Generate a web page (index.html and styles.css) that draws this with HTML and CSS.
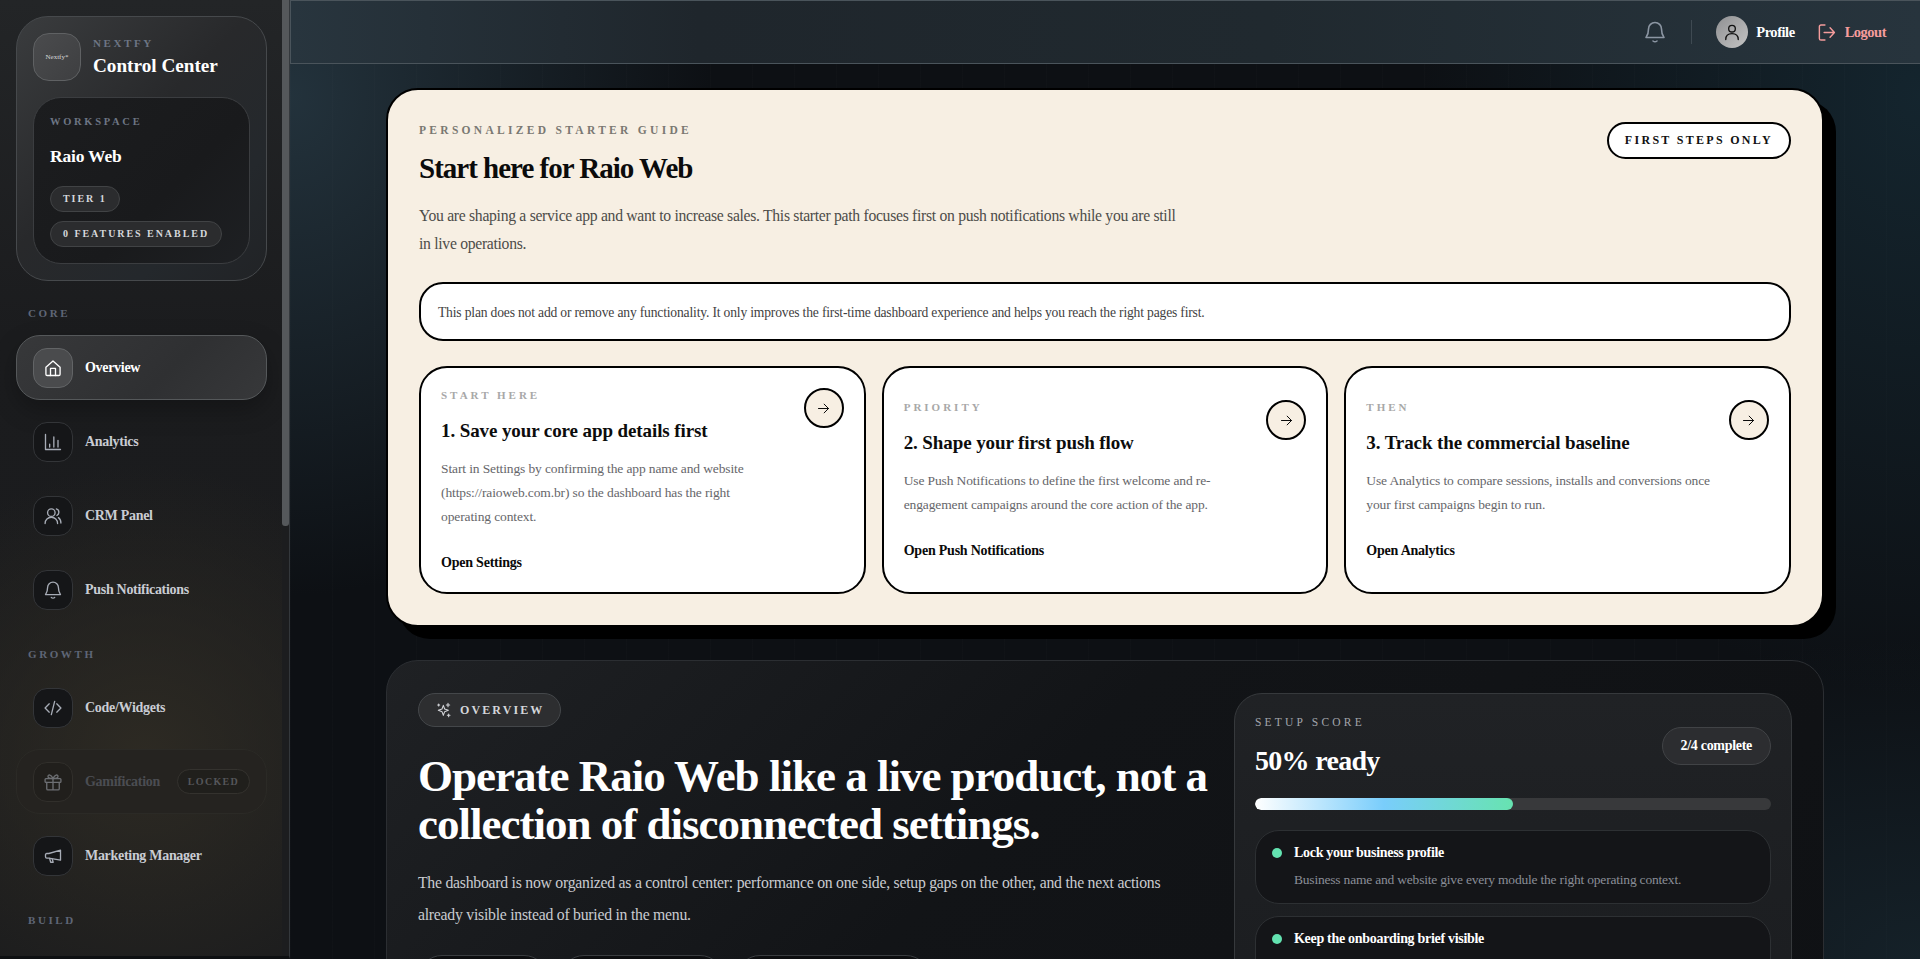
FILE: index.html
```html
<!DOCTYPE html>
<html lang="en">
<head>
<meta charset="utf-8">
<title>Nextfy Control Center</title>
<link rel="stylesheet" href="styles.css">
</head>
<body>
<div class="app">
  <aside class="sidebar">
    <div class="side-content">
      <div class="brand-card">
        <div class="brand-head">
          <div class="logo"><span>Nextfy*</span></div>
          <div class="brand-text">
            <div class="brand-eyebrow">NEXTFY</div>
            <div class="brand-title">Control Center</div>
          </div>
        </div>
        <div class="workspace">
          <div class="ws-eyebrow">WORKSPACE</div>
          <div class="ws-name">Raio Web</div>
          <div class="ws-tags">
            <span class="tag">TIER 1</span>
            <span class="tag">0 FEATURES ENABLED</span>
          </div>
        </div>
      </div>
      <div class="nav-label nav-label-core">CORE</div>
      <nav class="nav-group">
        <a class="nav-item active"><span class="nav-icon"><svg viewBox="0 0 24 24"><path d="M3.500 11 12 3.500 20.500 11v8.500a1.500 1.500 0 0 1-1.500 1.500H5a1.500 1.500 0 0 1-1.500-1.500z"/><path d="M9 21v-8.500h6V21"/></svg></span><span>Overview</span></a>
        <a class="nav-item"><span class="nav-icon"><svg viewBox="0 0 24 24"><path d="M3 3v18h18"/><path d="M8 14.500V18M13 6v12M18 10v8"/></svg></span><span>Analytics</span></a>
        <a class="nav-item"><span class="nav-icon"><svg viewBox="0 0 24 24"><circle cx="10" cy="8" r="4.500"/><path d="M2.500 21c0-4.500 3.300-7.500 7.500-7.500s7.500 3 7.500 7.500"/><path d="M16 3.500c2 .6 3.200 2.400 3 4.500-.1 1.400-1 2.700-2.300 3.400M18.500 14c1.900 1.200 3 3.500 3 6.500"/></svg></span><span>CRM Panel</span></a>
        <a class="nav-item"><span class="nav-icon"><svg viewBox="0 0 24 24"><path d="M12 2.500a6.500 6.500 0 0 0-6.500 6.500c0 6-2.500 8-2.500 8.500h18c0-.5-2.500-2.500-2.500-8.500A6.500 6.500 0 0 0 12 2.500z"/><path d="M10 21c1 .8 3 .8 4 0"/></svg></span><span>Push Notifications</span></a>
      </nav>
      <div class="nav-label nav-label-growth">GROWTH</div>
      <nav class="nav-group">
        <a class="nav-item"><span class="nav-icon"><svg viewBox="0 0 24 24"><path d="M7.500 7 2.500 12l5 5M16.500 7l5 5-5 5M14 4l-4 16"/></svg></span><span>Code/Widgets</span></a>
        <a class="nav-item locked"><span class="nav-icon"><svg viewBox="0 0 24 24"><rect x="2.500" y="8" width="19" height="4.500" rx="1"/><path d="M4.500 12.500V20a1.500 1.500 0 0 0 1.500 1.500h12a1.500 1.500 0 0 0 1.500-1.500v-7.500M12 8v13.500"/><path d="M12 8C10 3 6 2.500 6 5.500 6 7 7.500 8 12 8zM12 8c2-5 6-5.500 6-2.500C18 7 16.500 8 12 8z"/></svg></span><span class="nav-name">Gamification</span><span class="lock-tag">LOCKED</span></a>
        <a class="nav-item"><span class="nav-icon"><svg viewBox="0 0 24 24"><path d="M21 5v12L7 14.500H4.500A1.500 1.500 0 0 1 3 13v-2.500A1.500 1.500 0 0 1 4.500 9H7z"/><path d="M8 15l1.200 4.500h3L11.200 16"/></svg></span><span>Marketing Manager</span></a>
      </nav>
      <div class="nav-label nav-label-build">BUILD</div>
    </div>
    <div class="side-track"><div class="side-thumb"></div></div>
  </aside>

  <div class="main">
    <header class="topbar">
      <svg class="bell" viewBox="0 0 24 24"><path d="M12 2.500a6.500 6.500 0 0 0-6.500 6.500c0 6-2.500 8-2.500 8.500h18c0-.5-2.500-2.500-2.500-8.500A6.500 6.500 0 0 0 12 2.500z"/><path d="M10 21c1 .8 3 .8 4 0"/></svg>
      <span class="top-sep"></span>
      <a class="profile">
        <span class="avatar"><svg viewBox="0 0 24 24"><circle cx="12" cy="8" r="4"/><path d="M4.500 21c0-4.500 3-7 7.500-7s7.500 2.500 7.500 7"/></svg></span>
        <span>Profile</span>
      </a>
      <a class="logout">
        <svg viewBox="0 0 24 24"><path d="M10 2.500H5A2 2 0 0 0 3 4.500v15a2 2 0 0 0 2 2h5"/><path d="M9 12h13M16.500 6l5.500 6-5.500 6"/></svg>
        <span>Logout</span>
      </a>
    </header>

    <div class="content">
      <section class="guide">
        <div class="guide-head">
          <div>
            <div class="guide-eyebrow">PERSONALIZED STARTER GUIDE</div>
            <h2 class="guide-title">Start here for Raio Web</h2>
            <p class="guide-lead">You are shaping a service app and want to increase sales. This starter path focuses first on push notifications while you are still in live operations.</p>
          </div>
          <span class="guide-pill">FIRST STEPS ONLY</span>
        </div>
        <div class="guide-note">This plan does not add or remove any functionality. It only improves the first-time dashboard experience and helps you reach the right pages first.</div>
        <div class="steps">
          <article class="step">
            <div class="step-body">
              <div class="step-eyebrow">START HERE</div>
              <h3 class="step-title">1. Save your core app details first</h3>
              <p class="step-text step-text-narrow">Start in Settings by confirming the app name and website (https://raioweb.com.br) so the dashboard has the right operating context.</p>
              <a class="step-link">Open Settings</a>
            </div>
            <span class="step-arrow"><svg viewBox="0 0 24 24"><path d="M4 12h16M13 5l7 7-7 7"/></svg></span>
          </article>
          <article class="step">
            <div class="step-body">
              <div class="step-eyebrow">PRIORITY</div>
              <h3 class="step-title">2. Shape your first push flow</h3>
              <p class="step-text">Use Push Notifications to define the first welcome and re-engagement campaigns around the core action of the app.</p>
              <a class="step-link">Open Push Notifications</a>
            </div>
            <span class="step-arrow"><svg viewBox="0 0 24 24"><path d="M4 12h16M13 5l7 7-7 7"/></svg></span>
          </article>
          <article class="step">
            <div class="step-body">
              <div class="step-eyebrow">THEN</div>
              <h3 class="step-title">3. Track the commercial baseline</h3>
              <p class="step-text">Use Analytics to compare sessions, installs and conversions once your first campaigns begin to run.</p>
              <a class="step-link">Open Analytics</a>
            </div>
            <span class="step-arrow"><svg viewBox="0 0 24 24"><path d="M4 12h16M13 5l7 7-7 7"/></svg></span>
          </article>
        </div>
      </section>

      <section class="hero">
        <div class="hero-left">
          <span class="hero-pill"><svg viewBox="0 0 24 24"><path d="M11 5l2 5.500 5.500 2-5.500 2-2 5.500-2-5.500-5.500-2 5.500-2z"/><path d="M18 2v5M15.500 4.500h5M19 18v4M17 20h4M4 3v3M2.500 4.500h3"/></svg>OVERVIEW</span>
          <h1 class="hero-title">Operate Raio Web like a live product, not a collection of disconnected settings.</h1>
          <p class="hero-text">The dashboard is now organized as a control center: performance on one side, setup gaps on the other, and the next actions already visible instead of buried in the menu.</p>
          <div class="hero-actions">
            <a class="hero-btn btn-a"></a>
            <a class="hero-btn btn-b"></a>
            <a class="hero-btn btn-c"></a>
          </div>
        </div>
        <aside class="score">
          <div class="score-head">
            <div>
              <div class="score-eyebrow">SETUP SCORE</div>
              <div class="score-value">50% ready</div>
            </div>
            <span class="score-pill">2/4 complete</span>
          </div>
          <div class="bar"><div class="bar-fill" style="width:50%"></div></div>
          <div class="check">
            <span class="dot"></span>
            <div>
              <div class="check-title">Lock your business profile</div>
              <div class="check-text">Business name and website give every module the right operating context.</div>
            </div>
          </div>
          <div class="check">
            <span class="dot"></span>
            <div>
              <div class="check-title">Keep the onboarding brief visible</div>
            </div>
          </div>
        </aside>
      </section>
    </div>
  </div>
</div>
</body>
</html>
```
FILE: styles.css
```css
* { box-sizing: border-box; }
html, body { margin: 0; height: 100%; overflow: hidden; }
body { font-family: "Liberation Serif", "Times New Roman", serif; background: #0d1014; color: #fff; }
a { color: inherit; text-decoration: none; }
svg { fill: none; stroke: currentColor; stroke-width: 1.6; stroke-linecap: round; stroke-linejoin: round; display: block; }
h1, h2, h3, p { margin: 0; }

.app { display: flex; height: 959px; overflow: hidden; }

/* Sidebar */
.sidebar {
  width: 290px; flex: none; display: flex; height: 959px; overflow: hidden;
  border-right: 1px solid #34383c; border-bottom: 3px solid #0e1012;
  background:
    radial-gradient(300px 290px at 50% 79%, #2d2a23 0%, rgba(45,42,35,0) 100%),
    linear-gradient(180deg, #232527 0%, #1b1c1e 35%, #1a1b1d 100%);
}
.side-content { width: 282px; flex: none; padding: 16px 0 0 16px; }
.side-track { width: 7px; flex: none; background: #1c1d1f; }
.side-thumb { height: 526px; border-radius: 0 0 3px 3px; background: #55585b; }

.brand-card {
  width: 251px; height: 265px; padding: 16px; border-radius: 32px;
  border: 1px solid #46494c;
  background: linear-gradient(135deg, #3a3c3e 0%, #28292b 45%, #24282c 75%, #212326 100%);
}
.brand-head { display: flex; align-items: center; gap: 12px; height: 48px; }
.logo {
  width: 48px; height: 48px; flex: none; border-radius: 16px; border: 1px solid #5f6163;
  background: linear-gradient(135deg, #4a4b4d, #3e3f41);
  display: flex; align-items: center; justify-content: center;
  font-size: 7px; color: #d8d8d8;
}
.brand-eyebrow { font-size: 11px; letter-spacing: 2.600px; color: #6d7584; font-weight: 700; line-height: 14px; }
.brand-title { font-size: 19.200px; font-weight: 700; line-height: 26px; margin-top: 3px; }
.workspace {
  margin-top: 16px; height: 167px; padding: 16px; border-radius: 28px;
  border: 1px solid #3b3d40;
  background: linear-gradient(135deg, #1c1d1f, #191a1c 60%, #1e2023);
}
.ws-eyebrow { font-size: 10.500px; letter-spacing: 2.700px; color: #6d7584; font-weight: 700; line-height: 12px; margin-top: 2px; }
.ws-name { font-size: 17.500px; font-weight: 700; line-height: 22px; margin-top: 17px; letter-spacing: -.2px; }
.ws-tags { display: flex; flex-direction: column; align-items: flex-start; gap: 9px; margin-top: 19px; }
.tag {
  height: 26px; line-height: 24px; padding: 0 12px; border-radius: 13px;
  border: 1px solid #414345; background: #2b2c2e;
  font-size: 10px; font-weight: 700; letter-spacing: 1.950px; color: #d6d8dc;
}

.nav-label { font-size: 11px; font-weight: 700; letter-spacing: 2.600px; color: #5f6676; line-height: 14px; padding-left: 12px; }
.nav-label-core { margin-top: 25px; margin-bottom: 15px; }
.nav-label-growth { margin-top: 25px; margin-bottom: 14px; }
.nav-label-build { margin-top: 25px; }
.nav-group { display: flex; flex-direction: column; gap: 9px; width: 251px; }
.nav-item {
  display: flex; align-items: center; gap: 12px; height: 65px; padding: 0 16px;
  border: 1px solid transparent; border-radius: 24px;
  font-size: 14px; font-weight: 700; color: #c9ccd3; letter-spacing: -.3px;
}
.nav-item.active {
  border-color: #55585a; color: #fff;
  background: linear-gradient(135deg, #37383a, #2f3032 60%, #37383a);
  box-shadow: 0 10px 24px rgba(0,0,0,.25);
}
.nav-icon {
  width: 40px; height: 40px; flex: none; border-radius: 14px; border: 1px solid #333538; background: #151618;
  display: flex; align-items: center; justify-content: center; color: #a7acb6;
}
.nav-icon svg { width: 20px; height: 20px; }
.nav-item.active .nav-icon { background: #4a4b4d; border-color: #626466; color: #fff; }
.nav-item.locked { background: #252320; border-color: #2b2a26; color: #4b4d52; }
.locked .nav-icon { background: #211f1c; color: #6d6f73; border-color: #312f2b; }
.nav-name { flex: 1; white-space: nowrap; }
.lock-tag {
  height: 25px; line-height: 23px; padding: 0 10px; border-radius: 13px;
  border: 1px solid #34322e; background: #201f1c; font-size: 10px; letter-spacing: 1.300px; color: #55565a;
}

/* Main */
.main {
  flex: 1; min-width: 0; height: 959px; overflow: hidden;
  background:
    repeating-linear-gradient(90deg, rgba(255,255,255,.012) 0 1px, transparent 1px 42px),
    radial-gradient(500px 600px at 100% 10%, rgba(24,48,60,.65), rgba(24,48,60,0)),
    radial-gradient(420px 500px at 0% 10%, rgba(36,52,62,.95), rgba(36,52,62,0)),
    radial-gradient(500px 320px at 100% 100%, rgba(26,44,54,.6), rgba(26,44,54,0)),
    #0d1014;
}
.topbar {
  height: 64px; display: flex; align-items: center; justify-content: flex-end; padding-right: 34px;
  border: 1px solid #4a545b; border-width: 1px 0 1px 1px;
  background: linear-gradient(90deg, #28353e 0%, #1f262c 25%, #20292f 60%, #27343d 100%);
}
.bell { width: 24px; height: 24px; color: #8c96a3; }
.top-sep { width: 1px; height: 24px; background: #3f4a52; margin: 0 24px; }
.profile { display: flex; align-items: center; gap: 8px; font-size: 14.500px; font-weight: 700; letter-spacing: -.45px; }
.avatar { width: 32px; height: 32px; border-radius: 50%; background: linear-gradient(135deg, #8f9092, #c4c4c4); color: #111; display: flex; align-items: center; justify-content: center; }
.avatar svg { width: 20px; height: 20px; }
.logout { display: flex; align-items: center; gap: 9px; margin-left: 22px; color: #f59c9c; font-size: 14.500px; font-weight: 700; letter-spacing: -.5px; }
.logout svg { width: 19px; height: 19px; stroke-width: 1.8; }

.content { padding: 24px 96px 0; display: flex; flex-direction: column; gap: 33px; }

.guide {
  height: 539px; padding: 32px 31px 0; border-radius: 32px; color: #0b0b0b;
  border: 2px solid #000; background: #f7efe3; box-shadow: 12px 12px 0 #000;
}
.guide-head { display: flex; justify-content: space-between; align-items: flex-start; height: 160px; }
.guide-eyebrow { font-size: 11.500px; font-weight: 700; letter-spacing: 3.300px; color: #7a7872; line-height: 16px; }
.guide-title { font-size: 29px; line-height: 38px; font-weight: 700; margin-top: 11px; letter-spacing: -1px; }
.guide-lead { width: 762px; font-size: 15.700px; line-height: 28px; color: #4d4c49; margin-top: 15px; letter-spacing: -.3px; }
.guide-pill {
  flex: none; height: 37px; line-height: 33px; padding: 0 16px; border-radius: 19px;
  border: 2px solid #000; background: #fff; font-size: 12px; font-weight: 700; letter-spacing: 2.300px; color: #111;
}
.guide-note {
  height: 59px; padding: 0 17px; line-height: 57px; border-radius: 24px;
  border: 2px solid #000; background: #fff; font-size: 13.600px; color: #3f3f3f; letter-spacing: -.18px;
}
.steps { display: grid; grid-template-columns: repeat(3, 1fr); gap: 16px; margin-top: 25px; }
.step {
  height: 228px; padding: 0 20px; border-radius: 28px; border: 2px solid #000; background: #fff;
  display: flex; justify-content: space-between; align-items: center; gap: 16px;
}
.step-body { flex: 1; min-width: 0; }
.step-eyebrow { font-size: 11px; letter-spacing: 3px; color: #a8a8a8; line-height: 14px; font-weight: 700; }
.step-title { font-size: 19px; font-weight: 700; line-height: 26px; margin-top: 16px; letter-spacing: -.1px; color: #0c0c0c; }
.step-text { font-size: 13.500px; line-height: 24px; color: #66666a; margin-top: 13px; letter-spacing: -.12px; }
.step-text-narrow { max-width: 320px; }
.step-link { display: block; font-size: 14px; font-weight: 700; line-height: 20px; margin-top: 24px; letter-spacing: -.22px; color: #0a0a0a; }
.step-arrow {
  flex: none; align-self: flex-start; margin-top: 20px;
  width: 40px; height: 40px; border-radius: 50%; border: 2px solid #000; background: #f7efe3;
  display: flex; align-items: center; justify-content: center;
}
.step:nth-child(n+2) .step-arrow { margin-top: 32px; }
.step-arrow svg { width: 15px; height: 15px; }

.hero {
  height: 420px; padding: 32px 31px 0 31px; border-radius: 32px; border: 1px solid #2b2e32;
  display: flex; justify-content: space-between; gap: 24px;
  background: linear-gradient(135deg, #1f2124 0%, #121417 42%, #0f1114 100%);
}
.hero-left { flex: 1; min-width: 0; }
.hero-pill {
  display: inline-flex; align-items: center; gap: 8px; height: 34px; padding: 0 16px 0 17px; border-radius: 17px;
  border: 1px solid #44474a; background: #2d2e30; font-size: 12px; font-weight: 700; letter-spacing: 2.100px; color: #d4d6da;
}
.hero-pill svg { width: 16px; height: 16px; }
.hero-title { font-size: 45px; line-height: 48px; font-weight: 700; margin-top: 25px; letter-spacing: -1px; width: 810px; }
.hero-text { font-size: 15.750px; line-height: 32px; color: #c9cbd0; margin-top: 19px; letter-spacing: -.25px; width: 760px; }
.hero-actions { display: flex; gap: 12px; margin-top: 24px; }
.hero-btn { height: 48px; border-radius: 24px; border: 1px solid #3a3d40; background: #0d0e10; }
.btn-a { width: 130px; }
.btn-b { width: 164px; }
.btn-c { width: 194px; }

.score {
  width: 558px; flex: none; height: 400px; padding: 20px; border-radius: 28px; border: 1px solid #36393c;
  background: linear-gradient(180deg, #202225, #1a1c1f);
}
.score-head { display: flex; justify-content: space-between; align-items: flex-start; height: 65px; }
.score-eyebrow { font-size: 11.500px; font-weight: 400; letter-spacing: 3.200px; color: #a2a5ab; line-height: 16px; }
.score-value { font-size: 28px; line-height: 36px; font-weight: 700; margin-top: 13px; letter-spacing: -.7px; }
.score-pill {
  height: 38px; line-height: 36px; padding: 0 18px; border-radius: 19px; margin-top: 13px;
  border: 1px solid #414346; background: #2c2d30; font-size: 14px; font-weight: 700; letter-spacing: -.3px;
}
.bar { height: 12px; border-radius: 6px; background: #38393b; margin-top: 19px; overflow: hidden; }
.bar-fill { height: 100%; border-radius: 6px; background: linear-gradient(90deg, #fff 0%, #79cdfb 50%, #67e3b0 100%); }
.check {
  display: flex; gap: 12px; height: 74px; padding: 12px 16px; border-radius: 24px; margin-top: 12px;
  border: 1px solid #2d3033; background: #141518;
}
.bar + .check { margin-top: 20px; }
.dot { width: 10px; height: 10px; border-radius: 50%; background: #63e2b0; flex: none; margin-top: 5px; }
.check-title { font-size: 14px; font-weight: 700; line-height: 20px; letter-spacing: -.3px; }
.check-text { font-size: 13.500px; line-height: 20px; color: #8a8e97; margin-top: 7px; letter-spacing: -.2px; }
```
